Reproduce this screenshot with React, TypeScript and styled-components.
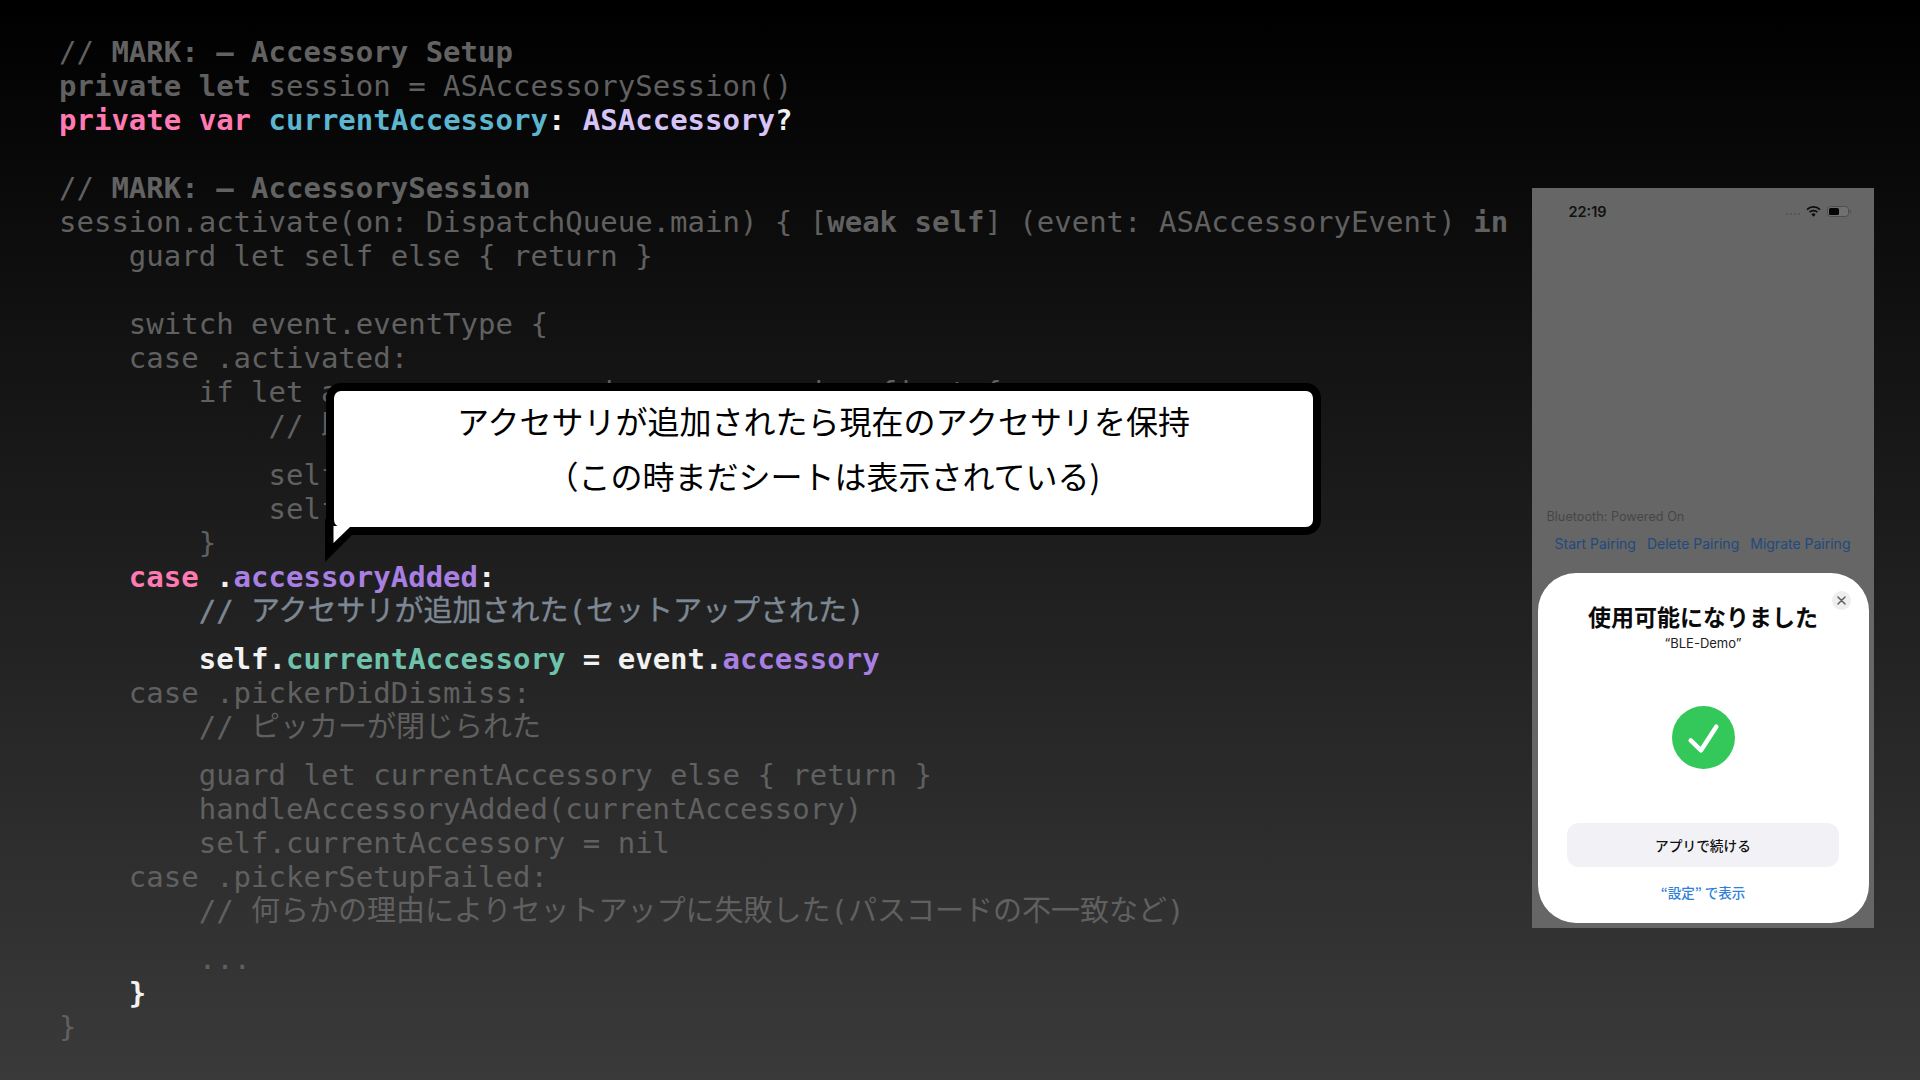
import React from "react";
import styled, { createGlobalStyle } from "styled-components";

const Global = createGlobalStyle`
  html, body { margin: 0; padding: 0; background: #000; }
  #root { width: 1920px; height: 1080px; overflow: hidden; }
`;

const Slide = styled.main`
  position: relative;
  width: 1920px;
  height: 1080px;
  display: flex;
  justify-content: space-between;
  align-items: flex-start;
  padding: 35.4px 46px 0 59px;
  box-sizing: border-box;
  background: linear-gradient(180deg, #000 0%, #3a3a3a 100%);
  overflow: hidden;
`;

const Code = styled.div`
  font-family: "DejaVu Sans Mono", "Noto Sans CJK JP", monospace;
  font-size: 29px;
  color: #606060;
  white-space: pre;
`;

const Line = styled.div<{ $indent?: number; $cjk?: boolean }>`
  height: 34px;
  line-height: 34px;
  padding-left: ${(p) => (p.$indent ?? 0) * 4}ch;
  margin-bottom: ${(p) => (p.$cjk ? "14.2px" : "0")};
`;

const Tok = styled.span<{ $c?: string; $b?: boolean; $note?: boolean }>`
  color: ${(p) => p.$c ?? "inherit"};
  font-weight: ${(p) => (p.$b ? 700 : 400)};
  -webkit-text-stroke: ${(p) => (p.$note ? "0.35px" : "0")};
`;

const PINK = "#ff7ab2";
const CYAN = "#5cb6d0";
const LAV = "#d6c3f7";
const PURPLE = "#a97fe3";
const TEAL = "#6fc3ac";
const WHITE = "#f2f2f2";
const NOTE = "#7d8894";
const BOLDDIM = "#626262";

const Bubble = styled.div`
  position: absolute;
  left: 326px;
  top: 383px;
  width: 995px;
  height: 152px;
  box-sizing: border-box;
  border: 8px solid #000;
  border-radius: 15px;
  background: #fff;
  padding-top: 2px;
  font-family: "Noto Sans CJK JP", "Liberation Sans", sans-serif;
  font-size: 32px;
  line-height: 55px;
  color: #000;
  text-align: center;
`;

const Tail = styled.svg`
  position: absolute;
  left: -9px;
  top: 128px;
  width: 40px;
  height: 50px;
  display: block;
`;

const Phone = styled.section`
  width: 342px;
  height: 740px;
  margin-top: 152.6px;
  background: #666;
  display: flex;
  flex-direction: column;
  font-family: Inter, "Noto Sans CJK JP", sans-serif;
  box-sizing: border-box;
  padding: 0 5.5px 5px;
`;

const StatusBar = styled.div`
  height: 47px;
  display: flex;
  align-items: center;
  justify-content: space-between;
  padding: 0 18px 0 31px;
`;

const Time = styled.span`
  font-size: 14.5px;
  font-weight: 600;
  color: #111;
`;

const StatusIcons = styled.div`
  display: flex;
  align-items: center;
  gap: 6px;
`;

const Signal = styled.span`
  display: flex;
  gap: 2px;
  margin-top: 6px;
`;

const SignalDot = styled.i`
  width: 2px;
  height: 2px;
  border-radius: 50%;
  background: #555;
`;

const Spacer = styled.div`
  flex: 1;
`;

const Status = styled.div`
  font-size: 12.7px;
  color: #464646;
  padding-left: 9px;
  height: 18px;
  line-height: 18px;
`;

const Actions = styled.div`
  display: flex;
  gap: 11px;
  padding-left: 17px;
  margin: 9px 0 19.5px;
  height: 18px;
  line-height: 18px;
`;

const Action = styled.span`
  font-size: 14px;
  color: #214a7d;
  white-space: nowrap;
`;

const Sheet = styled.div`
  position: relative;
  height: 350px;
  border-radius: 38px;
  background: #fff;
  display: flex;
  flex-direction: column;
  align-items: center;
`;

const Close = styled.div`
  position: absolute;
  top: 18px;
  right: 18px;
  width: 19px;
  height: 19px;
  border-radius: 50%;
  background: #eeeeef;
  display: flex;
  align-items: center;
  justify-content: center;
`;

const Title = styled.h2`
  margin: 28px 0 0;
  font-family: "Noto Sans CJK JP", sans-serif;
  font-size: 23px;
  line-height: 30px;
  font-weight: 700;
  color: #0a0a0a;
`;

const Subtitle = styled.div`
  margin-top: 3.5px;
  font-size: 13px;
  line-height: 18px;
  color: #222;
`;

const Check = styled.svg`
  margin-top: 53.5px;
  width: 63px;
  height: 63px;
  display: block;
`;

const Continue = styled.div`
  margin-top: 54px;
  width: 272px;
  height: 44px;
  border-radius: 12px;
  background: #f1f1f6;
  display: flex;
  align-items: center;
  justify-content: center;
  font-family: "Noto Sans CJK JP", sans-serif;
  font-size: 13.7px;
  font-weight: 500;
  color: #111;
`;

const SettingsLink = styled.div`
  margin-top: 14px;
  font-family: "Noto Sans CJK JP", sans-serif;
  font-size: 13.5px;
  font-weight: 500;
  line-height: 22px;
  color: #2f7fdc;
`;

export default function App() {
  return (
    <Slide>
      <Global />
      <Code>
        <Line>// <Tok $c={BOLDDIM} $b>MARK: – Accessory Setup</Tok></Line>
        <Line><Tok $b>private let</Tok> session = ASAccessorySession()</Line>
        <Line>
          <Tok $c={PINK} $b>private var</Tok> <Tok $c={CYAN} $b>currentAccessory</Tok>
          <Tok $c={WHITE} $b>:</Tok> <Tok $c={LAV} $b>ASAccessory</Tok>
          <Tok $c={WHITE} $b>?</Tok>
        </Line>
        <Line />
        <Line>// <Tok $c={BOLDDIM} $b>MARK: – AccessorySession</Tok></Line>
        <Line>
          session.activate(on: DispatchQueue.main) {"{"} [<Tok $b>weak self</Tok>] (event: ASAccessoryEvent) <Tok $b>in</Tok>
        </Line>
        <Line $indent={1}>guard let self else {"{"} return {"}"}</Line>
        <Line />
        <Line $indent={1}>switch event.eventType {"{"}</Line>
        <Line $indent={1}>case .activated:</Line>
        <Line $indent={2}>if let accessory = session.accessories.first {"{"}</Line>
        <Line $indent={3} $cjk>// 既存のアクセサリがあれば保持</Line>
        <Line $indent={3}>self.currentAccessory = accessory</Line>
        <Line $indent={3}>self.handleAccessoryAdded(accessory)</Line>
        <Line $indent={2}>{"}"}</Line>
        <Line $indent={1}>
          <Tok $c={PINK} $b>case</Tok> <Tok $c={WHITE} $b>.</Tok><Tok $c={PURPLE} $b>accessoryAdded</Tok><Tok $c={WHITE} $b>:</Tok>
        </Line>
        <Line $indent={2} $cjk><Tok $c={NOTE} $note>// アクセサリが追加された(セットアップされた)</Tok></Line>
        <Line $indent={2}>
          <Tok $c={WHITE} $b>self.</Tok><Tok $c={TEAL} $b>currentAccessory</Tok><Tok $c={WHITE} $b> = event.</Tok><Tok $c={PURPLE} $b>accessory</Tok>
        </Line>
        <Line $indent={1}>case .pickerDidDismiss:</Line>
        <Line $indent={2} $cjk>// ピッカーが閉じられた</Line>
        <Line $indent={2}>guard let currentAccessory else {"{"} return {"}"}</Line>
        <Line $indent={2}>handleAccessoryAdded(currentAccessory)</Line>
        <Line $indent={2}>self.currentAccessory = nil</Line>
        <Line $indent={1}>case .pickerSetupFailed:</Line>
        <Line $indent={2} $cjk>// 何らかの理由によりセットアップに失敗した(パスコードの不一致など)</Line>
        <Line $indent={2}>...</Line>
        <Line $indent={1}><Tok $c={WHITE} $b>{"}"}</Tok></Line>
        <Line>{"}"}</Line>
      </Code>

      <Bubble>
        アクセサリが追加されたら現在のアクセサリを保持
        <br />
        （この時まだシートは表示されている)
        <Tail viewBox="0 0 40 50">
          <polygon points="0,0 9,0 9,8 35,8 35,16 27,16 0,43" fill="#000" />
          <polygon points="8.5,7 8.5,24 25,8 25,7" fill="#fff" />
        </Tail>
      </Bubble>

      <Phone>
        <StatusBar>
          <Time>22:19</Time>
          <StatusIcons>
            <Signal>
              <SignalDot /><SignalDot /><SignalDot /><SignalDot />
            </Signal>
            <svg width="15" height="11" viewBox="0 0 15 11">
              <path d="M1 3.6a9.2 9.2 0 0 1 13 0" fill="none" stroke="#0c0c0c" strokeWidth="1.8" />
              <path d="M3.6 6.2a5.5 5.5 0 0 1 7.8 0" fill="none" stroke="#0c0c0c" strokeWidth="1.8" />
              <path d="M5.4 8.4 7.5 10.8 9.6 8.4a3 3 0 0 0-4.2 0z" fill="#0c0c0c" />
            </svg>
            <svg width="24" height="11" viewBox="0 0 24 11">
              <rect x="0.5" y="0.5" width="21" height="10" rx="3" fill="#707070" stroke="#4e4e4e" />
              <rect x="2" y="2" width="10" height="7" rx="1.6" fill="#050505" />
              <rect x="22.6" y="4" width="1.2" height="3" rx="0.6" fill="#4e4e4e" />
            </svg>
          </StatusIcons>
        </StatusBar>
        <Spacer />
        <Status>Bluetooth: Powered On</Status>
        <Actions>
          <Action>Start Pairing</Action>
          <Action>Delete Pairing</Action>
          <Action>Migrate Pairing</Action>
        </Actions>
        <Sheet>
          <Close>
            <svg width="9" height="9" viewBox="0 0 9 9">
              <path d="M1 1 8 8M8 1 1 8" stroke="#5f5f63" strokeWidth="1.5" strokeLinecap="round" />
            </svg>
          </Close>
          <Title>使用可能になりました</Title>
          <Subtitle>“BLE-Demo”</Subtitle>
          <Check viewBox="0 0 64 64">
            <circle cx="32" cy="32" r="32" fill="#34c759" />
            <path d="M19 35 29.5 45 45 21" fill="none" stroke="#fff" strokeWidth="4.6" strokeLinecap="round" strokeLinejoin="round" />
          </Check>
          <Continue>アプリで続ける</Continue>
          <SettingsLink>“設定” で表示</SettingsLink>
        </Sheet>
      </Phone>
    </Slide>
  );
}
